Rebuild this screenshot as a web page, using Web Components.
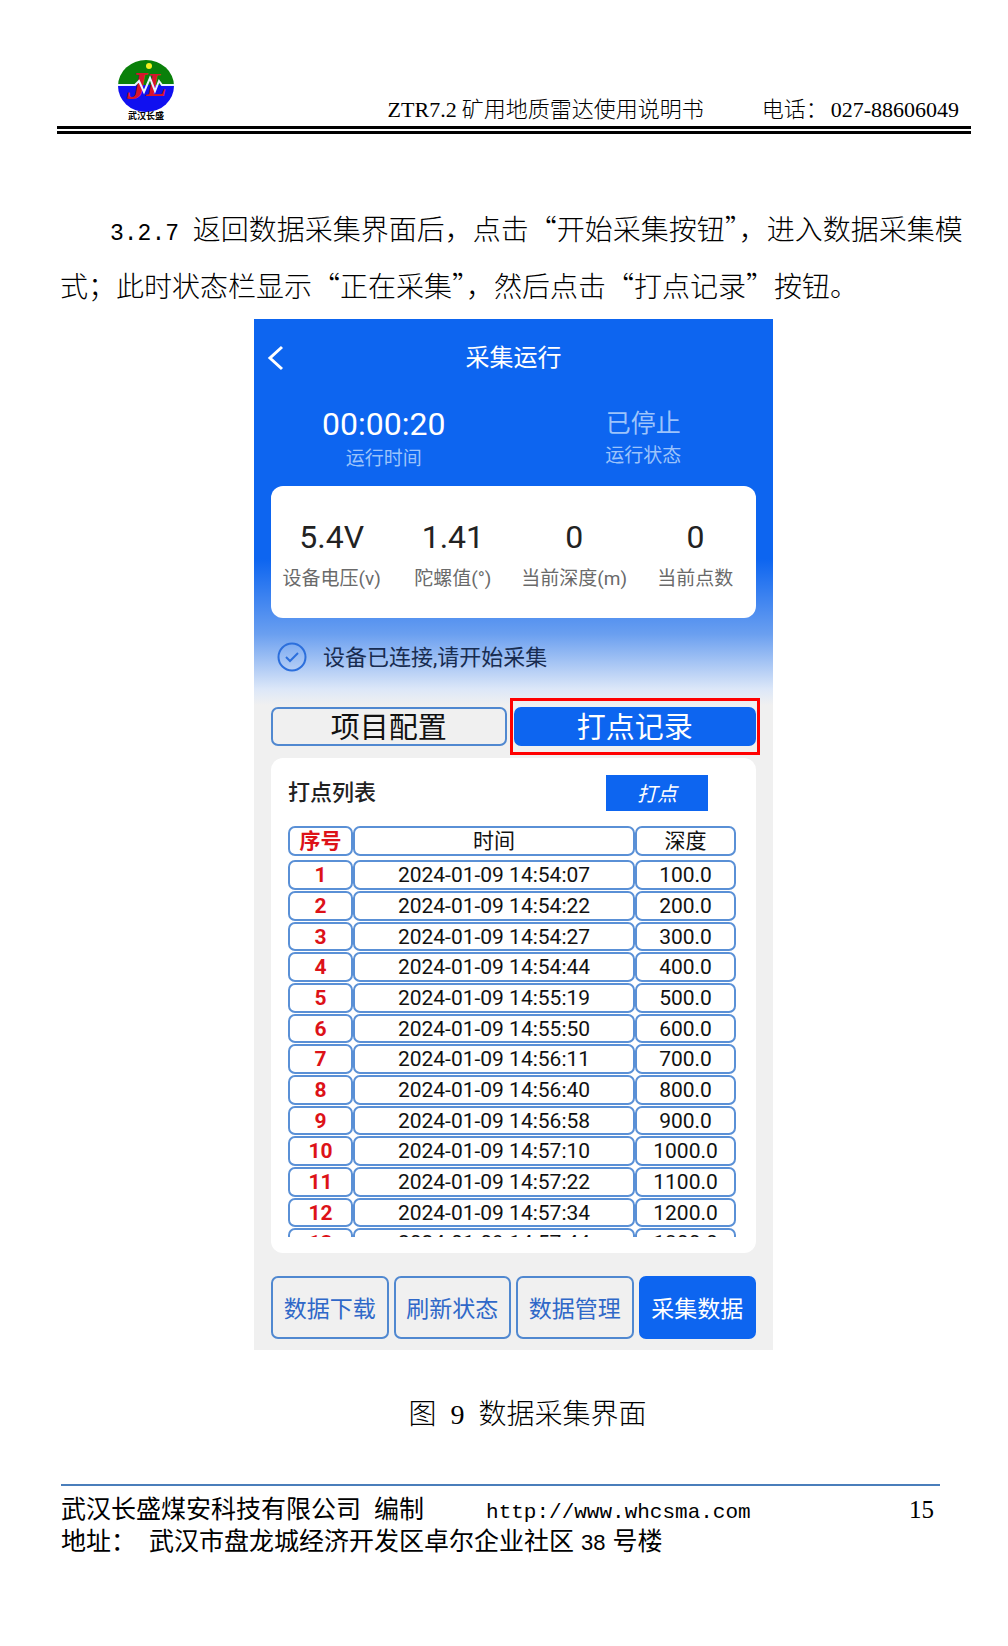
<!DOCTYPE html>
<html lang="zh-CN">
<head>
<meta charset="utf-8">
<title>ZTR7.2 矿用地质雷达使用说明书</title>
<style>
  body { margin: 0; background: #fff; color: #000; font-family: "Noto Sans CJK SC", sans-serif; }
</style>
</head>
<body>
<manual-page>
  <manual-header slot="header"></manual-header>
  <manual-step number="3.2.7">返回数据采集界面后，点击“开始采集按钮”，进入数据采集模式；此时状态栏显示“正在采集”，然后点击“打点记录”按钮。</manual-step>
  <manual-figure number="9" caption="数据采集界面">
    <phone-screen></phone-screen>
  </manual-figure>
  <manual-footer slot="footer" page="15"></manual-footer>
</manual-page>

<script>
const define = (name, html, setup) => customElements.define(name, class extends HTMLElement {
  connectedCallback() {
    if (this.shadowRoot) return;
    const t = document.createElement('template');
    t.innerHTML = typeof html === 'function' ? html(this) : html;
    this.attachShadow({ mode: 'open' }).append(t.content.cloneNode(true));
    if (setup) setup(this.shadowRoot, this);
  }
});

define('manual-page', `
<style>
  :host { display: flex; flex-direction: column; min-height: 100vh; box-sizing: border-box; }
  main { display: block; }
</style>
<slot name="header"></slot>
<main><slot></slot></main>
<slot name="footer"></slot>`);

define('company-logo', `
<style>:host { display: block; } svg { display: block; }</style>
<svg width="60" height="62" viewBox="0 0 60 62" role="img" aria-label="武汉长盛">
  <clipPath id="disc"><ellipse cx="30" cy="26" rx="28" ry="26"/></clipPath>
  <g clip-path="url(#disc)">
    <rect width="60" height="25" fill="#0a800a"/>
    <rect y="25" width="60" height="30" fill="#1010f0"/>
  </g>
  <text x="11" y="39" font-family="Liberation Serif" font-style="italic" font-weight="bold" font-size="40" fill="#d8142c">J</text>
  <text x="30" y="36" font-family="Liberation Serif" font-style="italic" font-weight="bold" font-size="34" fill="#d8142c">L</text>
  <circle cx="33" cy="6" r="3" fill="#f4f020"/>
  <path d="M2 25H19L23 21L28 32L34 18L39 31L43 21L46 25H58" fill="none" stroke="#e8f4ff" stroke-width="2"/>
  <text x="30" y="59" text-anchor="middle" font-family="Noto Sans CJK SC" font-weight="bold" font-size="9" fill="#000">武汉长盛</text>
</svg>`);

define('manual-header', `
<style>
  :host { display: block; padding: 0 37px 0 57px; }
  header { display: flex; align-items: flex-end; height: 126px; padding: 0 12px 0 59px; border-bottom: 8px double #000; }
  company-logo { padding-bottom: 4px; }
  .text { margin-left: auto; display: flex; align-items: baseline; gap: 58px; padding-bottom: 3px; font-size: 22px; line-height: 32px; font-weight: 300; }
  .latin { font-family: "Liberation Serif", serif; line-height: 1; }
  .phone { display: flex; align-items: baseline; gap: 3px; }
  .name { display: flex; align-items: baseline; gap: 5px; }
</style>
<header>
  <company-logo></company-logo>
  <div class="text">
    <span class="name"><span class="latin">ZTR7.2</span><span>矿用地质雷达使用说明书</span></span>
    <span class="phone"><span>电话：</span><span class="latin">027-88606049</span></span>
  </div>
</header>`);

define('manual-step', el => `
<style>
  :host { display: block; padding: 66px 40px 0 60px; }
  p { margin: 0; text-indent: 50px; font-size: 28px; line-height: 57px; font-weight: 300; }
  .mono { font-family: "Liberation Mono", monospace; font-size: 23px; line-height: 1; white-space: pre; }
</style>
<p><span class="mono">${el.getAttribute('number')} </span><slot></slot></p>`);

define('manual-figure', el => `
<style>
  :host { display: block; }
  figure { margin: 0; padding: 5px 235px 0 254px; }
  figcaption { display: flex; justify-content: center; align-items: baseline; gap: 14px; padding: 42px 0 0 28px; font-size: 28px; line-height: 40px; font-weight: 300; }
  .latin { font-family: "Liberation Serif", serif; line-height: 1; }
</style>
<figure>
  <slot></slot>
  <figcaption><span>图</span><span class="latin">${el.getAttribute('number')}</span><span>${el.getAttribute('caption')}</span></figcaption>
</figure>`);

define('run-stat', el => `
<style>
  :host { display: flex; flex-direction: column; align-items: center; }
  .value { font-size: 32px; line-height: 40px; }
  .label { font-size: 19px; line-height: 28px; }
  :host([tone="time"]) .value { color: #fff; }
  :host([tone="time"]) .label, :host([tone="state"]) { color: #9cc3fb; }
  :host([tone="time"]) .label { padding-top: 1px; }
  :host([tone="state"]) .value { font-size: 25px; line-height: 38px; }
  :host([tone="state"]) .label { line-height: 26px; }
  :host([tone="meter"]) { flex: 1; color: #222; }
  :host([tone="meter"]) .label { color: #6a6a6a; padding-top: 8px; white-space: nowrap; }
</style>
<span class="value">${el.getAttribute('value')}</span>
<span class="label">${el.getAttribute('label')}</span>`);

define('app-button', `
<style>
  :host { display: block; flex: 1; --size: 23px; --height: 63px; --drop: 3px; --ink: #2f68c8; }
  button { display: block; width: 100%; height: var(--height); box-sizing: border-box; margin: 0; padding: var(--drop) 0 0;
    border: 2px solid #5088d0; border-radius: 7px; background: transparent; color: var(--ink);
    font: inherit; font-size: var(--size); line-height: 1; white-space: nowrap; }
  :host([tab]) { --size: 29px; --height: 39px; --ink: #111; }
  :host([primary]) button { background: #0d65f0; border-color: #0d65f0; color: #fff; }
  :host([mark]) { --size: 20px; --height: 36px; --drop: 1px; flex: none; width: 102px; }
  :host([mark]) button { border-radius: 0; font-style: italic; }
</style>
<button type="button"><slot></slot></button>`);

define('record-table', `
<style>
  :host { display: block; height: 412px; overflow: hidden; }
  table { border-spacing: 0 1px; table-layout: fixed; width: 100%; font-size: 21px; line-height: 24px; color: #111; text-align: center; }
  th, td { box-sizing: border-box; height: 30px; padding: 0; border: 2px solid #5a90d6; border-radius: 7px; font-weight: 400; white-space: nowrap; }
  tr:nth-child(3n) > * { height: 29px; }
  tbody::before { content: ""; display: block; height: 2px; }
  tr > :first-child { color: #dd1218; font-weight: 700; }
  .no { width: 65px; } .depth { width: 101px; }
</style>
<table>
  <colgroup><col class="no"><col><col class="depth"></colgroup>
  <thead><tr><th scope="col">序号</th><th scope="col">时间</th><th scope="col">深度</th></tr></thead>
  <tbody></tbody>
</table>`, root => {
  const times = ['54:07','54:22','54:27','54:44','55:19','55:50','56:11','56:40','56:58','57:10','57:22','57:34','57:44'];
  root.querySelector('tbody').innerHTML = times.map((t, i) =>
    `<tr><th scope="row">${i + 1}</th><td>2024-01-09 14:${t}</td><td>${i + 1}00.0</td></tr>`).join('');
});

define('phone-screen', `
<style>
  :host { display: block; box-sizing: border-box; padding: 0 17px 11px; font-family: Roboto, "Noto Sans CJK SC", sans-serif;
    background: linear-gradient(#0d65f0 240px, #6a9ff0 315px, #dce7f8 370px, #f0f0f0 386px); }
  button.back { border: 0; padding: 0; margin: 0 0 0 -4px; background: none; width: 24px; height: 28px; }
  svg { display: block; }
  .bar { display: grid; grid-template-columns: 24px 1fr 24px; align-items: center; padding: 19px 0 17px; height: 40px; color: #fff; }
  h1 { margin: 0; text-align: center; font-size: 24px; line-height: 40px; font-weight: 400; }
  .run { display: flex; height: 82px; padding: 9px 0 0; }
  .run > * { flex: 1; }
  .run > :first-child { padding-right: 16px; }
  .run > :last-child { padding: 1px 0 0 18px; }
  .meters { display: flex; height: 132px; box-sizing: border-box; padding: 31px 0 0; border-radius: 12px; background: #fff; }
  .status { display: flex; align-items: center; gap: 16px; height: 78px; padding-left: 6px; font-size: 22px; color: #182c50; }
  .status span { padding-bottom: 4px; }
  .tabs { display: grid; grid-template-columns: 34fr 35fr; gap: 7px; padding: 11px 0 12px; }
  .hot { position: relative; }
  .hot::after { content: ""; position: absolute; inset: -9px -4px; border: 3px solid #f00; pointer-events: none; }
  .list { background: #fff; border-radius: 12px; padding: 17px 20px 16px 17px; }
  .head { display: flex; justify-content: space-between; align-items: center; padding: 0 28px 14px 0; }
  h2 { margin: 0; font-size: 22px; line-height: 36px; font-weight: 500; color: #222; }
  .actions { display: flex; gap: 5px; padding-top: 23px; }
</style>
<div class="bar">
  <button class="back" type="button" aria-label="返回"><svg width="24" height="28" viewBox="0 0 24 28" fill="none" stroke="#fff" stroke-width="3"><path d="M15 3L3 14L15 25"/></svg></button>
  <h1>采集运行</h1>
</div>
<div class="run">
  <run-stat tone="time" value="00:00:20" label="运行时间"></run-stat>
  <run-stat tone="state" value="已停止" label="运行状态"></run-stat>
</div>
<div class="meters">
  <run-stat tone="meter" value="5.4V" label="设备电压(v)"></run-stat>
  <run-stat tone="meter" value="1.41" label="陀螺值(°)"></run-stat>
  <run-stat tone="meter" value="0" label="当前深度(m)"></run-stat>
  <run-stat tone="meter" value="0" label="当前点数"></run-stat>
</div>
<div class="status">
  <svg width="30" height="30" viewBox="0 0 30 30" fill="none" stroke="#2c6fdc" stroke-width="2"><circle cx="15" cy="15" r="13.5"/><path d="M9 15L13 19L21 11"/></svg>
  <span>设备已连接,请开始采集</span>
</div>
<div class="tabs">
  <app-button tab>项目配置</app-button>
  <div class="hot"><app-button tab primary>打点记录</app-button></div>
</div>
<section class="list">
  <div class="head"><h2>打点列表</h2><app-button mark primary>打点</app-button></div>
  <record-table></record-table>
</section>
<div class="actions">
  <app-button>数据下载</app-button>
  <app-button>刷新状态</app-button>
  <app-button>数据管理</app-button>
  <app-button primary>采集数据</app-button>
</div>`);

define('manual-footer', el => `
<style>
  :host { display: block; padding: 52px 68px 0 61px; }
  footer { border-top: 2px solid #4a7ebb; padding: 5px 6px 0 0; font-size: 25px; line-height: 32px; }
  .line { display: flex; align-items: baseline; white-space: pre; }
  .mono { font-family: "Liberation Mono", monospace; font-size: 21px; line-height: 1; }
  a { color: inherit; text-decoration: none; margin-left: 62px; }
  .page { margin-left: auto; font-family: "Liberation Serif", serif; line-height: 1; }
  .gap { padding-left: 13px; }
  .no { padding: 0 7px; font-family: "Liberation Sans", sans-serif; font-size: 22px; line-height: 1; }
</style>
<footer>
  <div class="line"><span>武汉长盛煤安科技有限公司</span><span class="gap">编制</span><a class="mono" href="http://www.whcsma.com">http://www.whcsma.com</a><span class="page">${el.getAttribute('page')}</span></div>
  <div class="line"><span>地址：</span><span class="gap">武汉市盘龙城经济开发区卓尔企业社区</span><span class="no">38</span><span>号楼</span></div>
</footer>`);
</script>
</body>
</html>
